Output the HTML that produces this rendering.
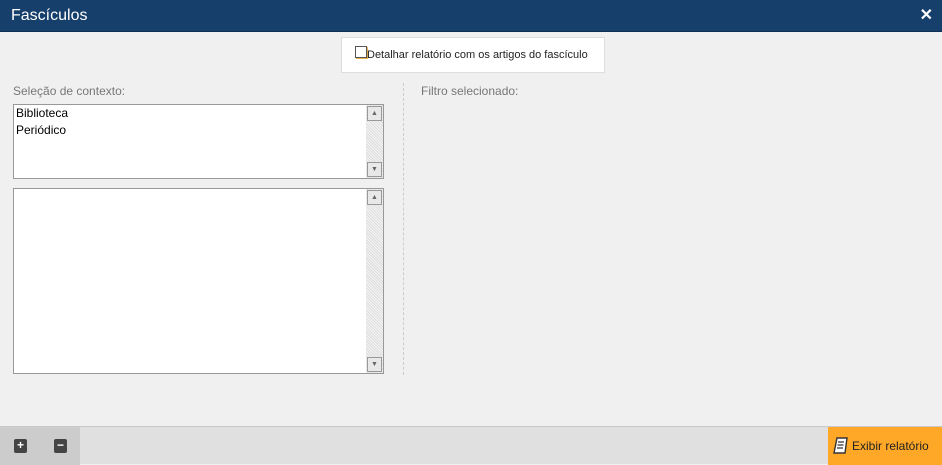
<!DOCTYPE html>
<html><head><meta charset="utf-8"><style>
*{margin:0;padding:0;box-sizing:border-box}
body{width:942px;height:464px;background:#f0f0f0;font-family:"Liberation Sans",sans-serif;position:relative;overflow:hidden}
.title{position:absolute;left:0;top:0;width:942px;height:32px;background:#173f6b;border-bottom:1px solid #0f2e50;color:#fff;font-size:16px;line-height:32px;padding-left:11px}
.x{position:absolute;right:9px;top:0;color:#fff;font-size:16px;font-weight:bold}
.chk{position:absolute;left:341px;top:37px;width:264px;height:36px;background:#fff;border:1px solid #ddd;font-size:11px;color:#222}
.chk i{position:absolute;left:13px;top:8px;width:12px;height:12px;border:1px solid #555;box-shadow:1px 1px 0 #e8b050}
.chk span{position:absolute;left:25px;top:11px}
.lbl{position:absolute;font-size:12px;color:#777}
.list{position:absolute;left:13px;width:371px;background:#fff;border:1px solid #999;font-size:12px;color:#000;padding:0 0 0 2px;line-height:17px}
.sb{position:absolute;right:0;top:0;bottom:0;width:17px;background:repeating-linear-gradient(45deg,#ddd 0 1px,#f4f4f4 1px 2px)}
.sb b,.sb u{position:absolute;left:1px;width:15px;height:15px;background:#e8e8e8;border:1px solid #999;font-size:7px;color:#666;text-align:center;line-height:13px;text-decoration:none;font-weight:normal}
.sb b{top:1px}.sb u{bottom:1px}
.div{position:absolute;left:403px;top:83px;height:292px;border-left:1px dashed #ccc}
.foot{position:absolute;left:0;top:426px;width:942px;height:38px;background:#e0e0e0;border-top:1px solid #c8c8c8}
.fl{position:absolute;left:0;top:0;width:80px;height:38px;background:#ccc}
.ib{position:absolute;top:12px;width:13px;height:14px;background:#444;border-radius:2px;color:#fff;font-size:12px;line-height:13px;text-align:center;font-weight:bold}
.btn{position:absolute;right:0;top:0;width:114px;height:38px;background:#ffa726;font-size:12px;color:#222;line-height:38px;padding-left:24px}
</style></head><body>
<div class="title">Fascículos<span class="x">✕</span></div>
<div class="chk"><i></i><span>Detalhar relatório com os artigos do fascículo</span></div>
<div class="lbl" style="left:13px;top:84px">Seleção de contexto:</div>
<div class="lbl" style="left:421px;top:84px">Filtro selecionado:</div>
<div class="list" style="top:104px;height:75px">Biblioteca<br>Periódico<div class="sb"><b>▲</b><u>▼</u></div></div>
<div class="list" style="top:188px;height:186px"><div class="sb"><b>▲</b><u>▼</u></div></div>
<div class="div"></div>
<div class="foot"><div class="fl"><div class="ib" style="left:14px">+</div><div class="ib" style="left:54px">−</div></div>
<div class="btn"><svg style="position:absolute;left:5px;top:10px" width="16" height="18" viewBox="0 0 16 18"><path d="M4 1h10l-2 15H1z" fill="#fff" stroke="#333" stroke-width="1.4"/><path d="M5 5h6M4.5 8h6M4 11h6" stroke="#333" stroke-width="1.2"/></svg>Exibir relatório</div></div>
</body></html>
